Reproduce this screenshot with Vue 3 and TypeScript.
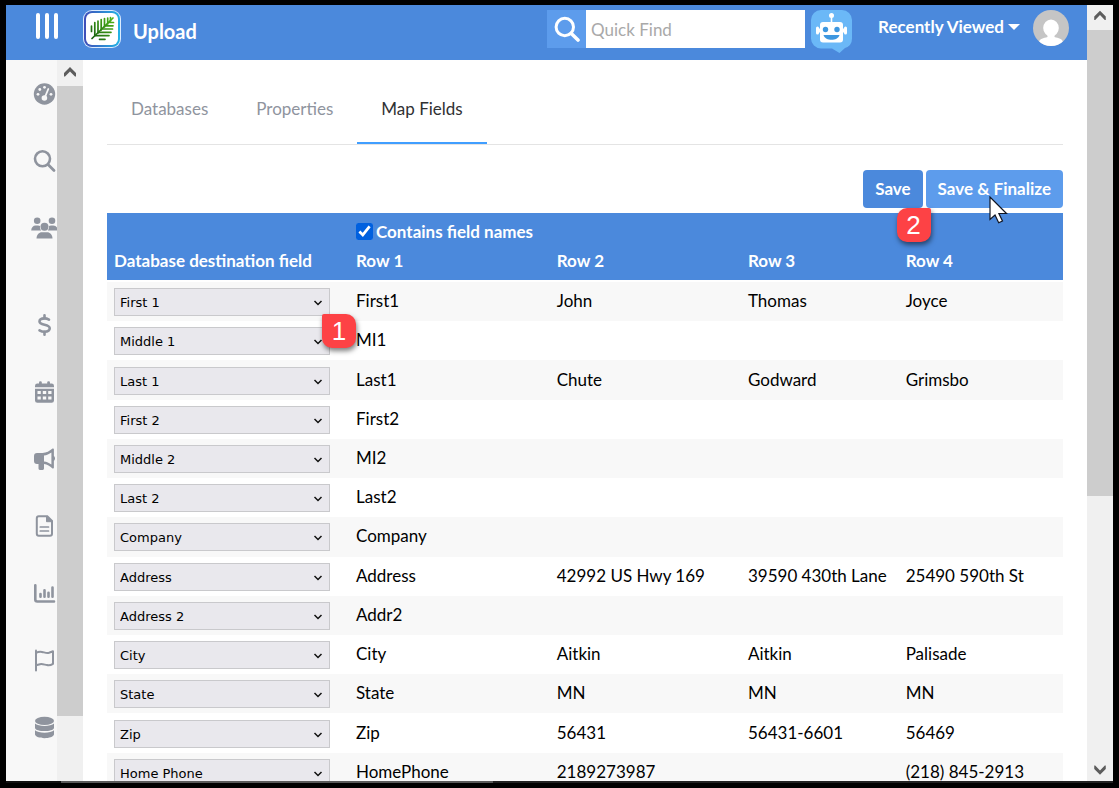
<script setup lang="ts">
import { ref } from 'vue'

interface FieldRow {
  target: string
  values: [string, string, string, string]
}

const rows = ref<FieldRow[]>([
  { target: 'First 1', values: ['First1', 'John', 'Thomas', 'Joyce'] },
  { target: 'Middle 1', values: ['MI1', '', '', ''] },
  { target: 'Last 1', values: ['Last1', 'Chute', 'Godward', 'Grimsbo'] },
  { target: 'First 2', values: ['First2', '', '', ''] },
  { target: 'Middle 2', values: ['MI2', '', '', ''] },
  { target: 'Last 2', values: ['Last2', '', '', ''] },
  { target: 'Company', values: ['Company', '', '', ''] },
  { target: 'Address', values: ['Address', '42992 US Hwy 169', '39590 430th Lane', '25490 590th St'] },
  { target: 'Address 2', values: ['Addr2', '', '', ''] },
  { target: 'City', values: ['City', 'Aitkin', 'Aitkin', 'Palisade'] },
  { target: 'State', values: ['State', 'MN', 'MN', 'MN'] },
  { target: 'Zip', values: ['Zip', '56431', '56431-6601', '56469'] },
  { target: 'Home Phone', values: ['HomePhone', '2189273987', '', '(218) 845-2913'] },
])

const targets: string[] = rows.value.map((r) => r.target)
const tabs: string[] = ['Databases', 'Properties', 'Map Fields']
const activeTab = ref('Map Fields')
const hasFieldNames = ref(true)
const quickFind = ref('')
</script>

<template>
  <div class="frame">
    <div class="window">
      <div class="app">
        <header class="topbar">
          <button class="menu" type="button" aria-label="Menu"><i></i><i></i><i></i></button>
          <svg class="logo" viewBox="0 0 38 38" aria-hidden="true">
            <defs>
              <linearGradient id="ring" x1="0" x2="1" y1="0" y2="0">
                <stop offset="0" stop-color="#3f4db8" />
                <stop offset="1" stop-color="#22b4e6" />
              </linearGradient>
              <linearGradient id="leaf" gradientUnits="userSpaceOnUse" x1="8" x2="30" y1="29" y2="8">
                <stop offset="0" stop-color="#155d10" />
                <stop offset="1" stop-color="#4fb417" />
              </linearGradient>
            </defs>
            <rect x="0" y="0" width="38" height="38" rx="9" fill="#dcecff" />
            <rect x="1" y="1" width="36" height="36" rx="8" fill="url(#ring)" />
            <rect x="3" y="3" width="32" height="32" rx="6" fill="#fff" />
            <g fill="none" stroke="url(#leaf)" stroke-width="1.700" stroke-linecap="round">
              <path d="M9 28.500L30 8" />
              <path d="M8.500 16v5.500M11.800 12.500v13M15 11v12M18.200 9.500v10.500M21.500 8.500v8.500M24.700 8v6M27.500 7.500v3.500" />
              <path d="M12.500 25.600h13.500M15.500 22.300h12.500M18.700 19h10.800M22 15.800h8M25 12.500h5.500M16.500 29.300h5.500" />
            </g>
          </svg>
          <h1 class="title">Upload</h1>
          <form class="find" role="search" @submit.prevent>
            <button class="find-btn" type="submit" aria-label="Search">
              <svg viewBox="0 0 26 26" width="26" height="26" fill="none" stroke="#fff" stroke-linecap="round">
                <circle cx="10.800" cy="11" r="8.700" stroke-width="3" />
                <path d="M17.300 17.500L24 24" stroke-width="3.600" />
              </svg>
            </button>
            <input v-model="quickFind" type="text" placeholder="Quick Find" aria-label="Quick Find" />
          </form>
          <button class="bot" type="button" aria-label="Assistant">
            <svg viewBox="0 0 41 43" width="41" height="43">
              <path d="M10 0h21a10 10 0 0 1 10 10v18.500a10 10 0 0 1-7 9.500L28.500 43 21 38.500H10A10 10 0 0 1 0 28.500V10A10 10 0 0 1 10 0z" fill="#6bb8f7" />
              <g fill="#fff">
                <circle cx="20.500" cy="5.500" r="2.500" />
                <rect x="19.700" y="6" width="1.600" height="7" />
                <rect x="9" y="12" width="23" height="20.500" rx="3" />
                <rect x="5" y="16.500" width="3" height="8" rx="1.500" />
                <rect x="33" y="16.500" width="3" height="8" rx="1.500" />
                <rect x="7" y="18.500" width="27" height="4" />
              </g>
              <circle cx="14.500" cy="19.500" r="2.700" fill="#3d97e0" />
              <circle cx="26" cy="19.500" r="2.700" fill="#3d97e0" />
              <path d="M12.500 25h16c-1 3.500-4.500 4.800-8 4.800s-7-1.300-8-4.800z" fill="#3d97e0" />
            </svg>
          </button>
          <button class="recent" type="button">Recently Viewed<i class="caret"></i></button>
          <svg class="avatar" viewBox="0 0 36 36" role="img" aria-label="Account">
            <defs><clipPath id="disc"><circle cx="18" cy="18" r="18" /></clipPath></defs>
            <g clip-path="url(#disc)">
              <rect width="36" height="36" fill="#c5c5c5" />
              <ellipse cx="18" cy="18" rx="7.800" ry="8.600" fill="#fff" />
              <path d="M14.500 22h7v5c4 1 8 2 8.500 5v5H6v-5c.5-3 4.500-4 8.500-5z" fill="#fff" />
            </g>
          </svg>
        </header>

        <div class="body">
          <nav class="side" aria-label="Sections">
            <a href="#dashboard" aria-label="Dashboard">
              <svg viewBox="0 0 27 24">
                <circle cx="13.500" cy="12" r="10.700" fill="#8f949e" />
                <g fill="#f8f8f8">
                  <circle cx="7" cy="12.300" r="1.400" /><circle cx="8.800" cy="7.500" r="1.400" />
                  <circle cx="13.500" cy="5.300" r="1.400" /><circle cx="20" cy="12.300" r="1.400" />
                  <circle cx="13.400" cy="16" r="2.800" />
                </g>
                <path d="M13.600 16L17.300 7" stroke="#f8f8f8" stroke-width="1.800" stroke-linecap="round" />
              </svg>
            </a>
            <a href="#search" aria-label="Search">
              <svg viewBox="0 0 27 24" fill="none" stroke="#8f949e" stroke-linecap="round">
                <circle cx="11.500" cy="9.800" r="7.500" stroke-width="2.600" />
                <path d="M17 15.500l6 6" stroke-width="2.800" />
              </svg>
            </a>
            <a href="#people" aria-label="People">
              <svg viewBox="0 0 27 24" fill="#8f949e">
                <circle cx="6.200" cy="4.800" r="3.300" /><circle cx="21" cy="4.800" r="3.300" />
                <path d="M.2 14.500c0-3 2-5 4.500-5h2.300c.8 0 1.500.2 2 .5-.3 2 .3 3.500 1.300 4.500z" />
                <path d="M26.800 14.500c0-3-2-5-4.500-5H20c-.8 0-1.500.2-2 .5.300 2-.3 3.500-1.300 4.500z" />
                <circle cx="13.500" cy="10.800" r="4" />
                <path d="M5.500 22.500c0-3.800 2.500-6.300 5.500-6.300h5c3 0 5.500 2.500 5.500 6.300z" />
              </svg>
            </a>
            <a href="#giving" class="group" aria-label="Giving">
              <svg viewBox="0 0 27 24" fill="none" stroke="#8f949e" stroke-width="2.600" stroke-linecap="round">
                <path d="M13.500 2.300v3M13.500 18.700v3" />
                <path d="M18 6.600c-1.500-.8-3-1.200-4.500-1.200-3 0-5 1.200-5 3.200 0 4.300 10.200 2.200 10.200 6.700 0 2.200-2.200 3.400-5.200 3.400-1.800 0-3.500-.5-5-1.400" />
              </svg>
            </a>
            <a href="#calendar" aria-label="Calendar">
              <svg viewBox="0 0 27 24" fill="#8f949e">
                <rect x="8" y="1.200" width="2.800" height="5" rx="1.300" /><rect x="16.200" y="1.200" width="2.800" height="5" rx="1.300" />
                <path d="M4 7.200V6a2.400 2.400 0 0 1 2.400-2.400h14.200A2.400 2.400 0 0 1 23 6v1.200z" />
                <path fill-rule="evenodd" d="M4 8.700h19v11.700a2.400 2.400 0 0 1-2.400 2.400H6.400A2.400 2.400 0 0 1 4 20.400zM6.500 11v3h3.300v-3zM11.800 11v3h3.400v-3zM17.200 11v3h3.300v-3zM6.500 16.500v3h3.300v-3zM11.800 16.500v3h3.400v-3zM17.200 16.500v3h3.300v-3z" />
              </svg>
            </a>
            <a href="#campaigns" aria-label="Campaigns">
              <svg viewBox="0 0 27 24" fill="#8f949e">
                <path fill-rule="evenodd" d="M22.900 2.600v6.500c1.500.8 1.500 4 0 4.800v6.500c0 1-1 1.300-1.700.8-2.200-2-5-4-8.200-4.200v4.600a1.300 1.300 0 0 1-1.300 1.300H8.800a1.300 1.300 0 0 1-1.300-1.300V17H6a3 3 0 0 1-3-3V9a3 3 0 0 1 3-3h5.500c4 0 7-2 9.700-4.200.7-.5 1.700-.2 1.700.8zM20.400 5.500c-2.200 1.600-4.800 2.700-7.400 3v6c2.600.3 5.200 1.400 7.400 3z" />
              </svg>
            </a>
            <a href="#documents" aria-label="Documents">
              <svg viewBox="0 0 27 24" fill="none" stroke="#8f949e" stroke-width="2">
                <path d="M7.800 2.300h8.500L21 7v12.700a2 2 0 0 1-2 2H7.800a2 2 0 0 1-2-2V4.300a2 2 0 0 1 2-2z" />
                <path d="M15.500 2v5.700h5.700z" fill="#8f949e" stroke-width="1" />
                <path d="M9.300 13h8.200M9.300 17h8.200" stroke-width="1.700" stroke-linecap="round" />
              </svg>
            </a>
            <a href="#reports" aria-label="Reports">
              <svg viewBox="0 0 27 24" fill="none" stroke="#8f949e" stroke-width="2.600" stroke-linecap="round" stroke-linejoin="round">
                <path d="M4.300 4.200v14.300a2 2 0 0 0 2 2H23" />
                <path d="M9.500 15.700v-2.700M13.500 15.700V9.200M17.500 15.700v-4M21.500 15.700V6.500" />
              </svg>
            </a>
            <a href="#goals" aria-label="Goals">
              <svg viewBox="0 0 27 24" fill="none" stroke="#8f949e" stroke-width="2" stroke-linecap="round" stroke-linejoin="round">
                <path d="M5 2.500v20" />
                <path d="M5 4.800c2-1 4-1.300 6-.9 2.500.5 4.500 1.600 7 .9l4-1.500v12.500c-2 1.300-4 1.700-6 1.300-2.500-.4-4.500-1.400-7-.9L5 17.300" />
              </svg>
            </a>
            <a href="#data" aria-label="Data">
              <svg viewBox="0 0 27 24" fill="#8f949e">
                <ellipse cx="13.500" cy="5.900" rx="9.500" ry="4.200" />
                <path d="M4 8.600c3 3.200 16 3.200 19 0v4.300c-1 4.200-18 4.200-19 0z" />
                <path d="M4 15.300c3 3.200 16 3.200 19 0v4.300c-1 4.800-18 4.800-19 0z" />
              </svg>
            </a>
          </nav>

          <div class="bar" aria-hidden="true">
            <svg viewBox="0 0 26 26"><path d="M7 16.500v-3.500L13 7l6 6v3.500h-1L13 11.500l-5 5z" fill="#5c5c5c" /></svg>
            <div class="thumb side-thumb"></div>
          </div>

          <main class="main">
            <nav class="tabs" aria-label="Steps">
              <a
                v-for="t in tabs"
                :key="t"
                href="#"
                :class="{ active: t === activeTab }"
                @click.prevent="activeTab = t"
              >{{ t }}</a>
            </nav>

            <div class="actions">
              <div class="action">
                <button class="btn" type="button">Save</button>
                <span class="badge two">2</span>
              </div>
              <div class="action">
                <button class="btn hover" type="button">Save &amp; Finalize</button>
                <svg class="cursor" viewBox="0 0 19 28" aria-hidden="true">
                  <path d="M1 1v22.500l5-4.500 3.700 7.800 3.800-1.800-3.600-7.500h7.600z" fill="#fff" stroke="#101522" stroke-width="1.200" />
                </svg>
              </div>
            </div>

            <table class="map">
              <thead>
                <tr>
                  <th class="c1" scope="col">Database destination field</th>
                  <th class="c2" scope="col">
                    <label class="check"><input v-model="hasFieldNames" type="checkbox" />Contains field names</label>
                    Row 1
                  </th>
                  <th class="c3" scope="col">Row 2</th>
                  <th class="c4" scope="col">Row 3</th>
                  <th scope="col">Row 4</th>
                </tr>
              </thead>
              <tbody>
                <tr v-for="(row, i) in rows" :key="i">
                  <td class="target">
                    <div class="pick">
                      <select v-model="row.target" :aria-label="'Destination for ' + row.values[0]">
                        <option v-for="t in targets" :key="t">{{ t }}</option>
                      </select>
                      <svg viewBox="0 0 10 6" aria-hidden="true"><path d="M1.500 1L5 4.500 8.500 1" fill="none" stroke="#111" stroke-width="1.500" /></svg>
                      <span v-if="i === 0" class="badge one">1</span>
                    </div>
                  </td>
                  <td v-for="(v, j) in row.values" :key="j">{{ v }}</td>
                </tr>
              </tbody>
            </table>
          </main>
        </div>
      </div>

      <div class="bar page-bar" aria-hidden="true">
        <svg viewBox="0 0 26 26"><path d="M7 15.500v-3.500L13 6l6 6v3.500h-1L13 10.500l-5 5z" fill="#5c5c5c" /></svg>
        <div class="thumb page-thumb"></div>
        <svg class="down" viewBox="0 0 26 26"><path d="M7 10v3.500l6 6 6-6V10h-1l-5 5-5-5z" fill="#5c5c5c" /></svg>
      </div>
    </div>
    <div class="edge"></div>
  </div>
</template>

<style>
html,
body,
#app {
  height: 100%;
  margin: 0;
}
</style>

<style scoped>
.frame {
  box-sizing: border-box;
  height: 100vh;
  padding: 5px 6px;
  display: flex;
  flex-direction: column;
  overflow: hidden;
  background: #000;
  font-family: Lato, "Liberation Sans", sans-serif;
  font-size: 17px;
  color: #000;
}
.frame *,
.frame *::before {
  box-sizing: border-box;
}
.edge {
  flex: none;
  height: 2px;
  background: linear-gradient(90deg, #111 5%, #5a5a5a 5%, #5a5a5a 44%, #222 44%);
}
.window {
  flex: 1;
  min-height: 0;
  display: flex;
  background: #fff;
}
.app {
  flex: 1;
  min-width: 0;
  display: flex;
  flex-direction: column;
}
button {
  border: 0;
  padding: 0;
  background: none;
  font: inherit;
  color: inherit;
  cursor: pointer;
}

.topbar {
  flex: none;
  height: 55px;
  padding: 5px 18px 0 30px;
  display: flex;
  align-items: flex-start;
  background: #4b89dc;
  color: #fff;
}
.menu {
  display: flex;
  gap: 5px;
  padding-top: 3px;
}
.menu i {
  width: 4px;
  height: 26px;
  border-radius: 2px;
  background: #fff;
}
.logo {
  width: 38px;
  height: 38px;
  margin-left: 25px;
}
.title {
  margin: 0 auto 0 12px;
  font-size: 20px;
  line-height: 42px;
  font-weight: 700;
}
.find {
  display: flex;
  height: 38px;
}
.find-btn {
  width: 39px;
  display: grid;
  place-items: center;
  background: #5d9cec;
}
.find input {
  width: 219px;
  padding: 0 5px;
  border: 0;
  border-radius: 0;
  background: #fff;
  font: inherit;
  outline: 0;
}
.find input::placeholder {
  color: #a9a9a9;
  opacity: 1;
}
.bot {
  margin-left: 6px;
}
.bot svg {
  display: block;
}
.recent {
  margin-left: 26px;
  display: flex;
  align-items: center;
  gap: 4px;
  line-height: 34px;
  font-weight: 700;
}
.caret {
  border: 6px solid transparent;
  border-top-color: #fff;
  border-bottom: 0;
}
.avatar {
  width: 36px;
  height: 36px;
  margin-left: 13px;
}

.body {
  flex: 1;
  min-height: 0;
  display: flex;
}
.side {
  width: 51px;
  padding: 22px 0 0 25px;
  overflow: hidden;
  background: #f8f8f8;
}
.side a {
  display: block;
  height: 24px;
  margin-bottom: 43px;
}
.side .group {
  margin-top: 73px;
}
.side svg {
  display: block;
  width: 27px;
  height: 24px;
}
.bar {
  flex: none;
  width: 26px;
  display: flex;
  flex-direction: column;
  background: #f0f0f0;
}
.bar svg {
  flex: none;
  width: 26px;
  height: 26px;
}
.page-bar svg {
  height: 25px;
}
.thumb {
  background: #cdcdcd;
}
.side-thumb {
  flex: none;
  height: calc(100% - 91px);
}
.page-thumb {
  height: 60%;
}
.bar .down {
  margin-top: auto;
}

.main {
  flex: 1;
  min-width: 0;
  padding: 0 24px;
  overflow: hidden;
}
.tabs {
  display: flex;
  height: 85px;
  border-bottom: 1px solid #e4e4e4;
}
.tabs a {
  padding: 0 24px;
  line-height: 97px;
  height: 84px;
  border-bottom: 2px solid transparent;
  color: #8f949e;
  text-decoration: none;
}
.tabs .active {
  color: #303133;
  border-bottom-color: #409eff;
}
.actions {
  display: flex;
  justify-content: flex-end;
  gap: 3px;
  padding: 25px 0 5px;
}
.action {
  position: relative;
}
.btn {
  display: block;
  height: 38px;
  padding: 0 12px 2px;
  border-radius: 4px;
  background: #4b89dc;
  color: #fff;
  font-weight: 700;
}
.btn.hover {
  background: #5d9cec;
}
.badge {
  position: absolute;
  z-index: 2;
  width: 34px;
  height: 34px;
  line-height: 34px;
  text-align: center;
  font-family: "Liberation Sans", Arial, sans-serif;
  font-size: 26px;
  color: #fff;
  background: #fd4245;
  box-shadow: 1px 3px 5px rgba(0, 0, 0, 0.5);
}
.one {
  left: 208px;
  top: 26px;
  border-radius: 2px 10px 10px 10px;
}
.two {
  right: -8px;
  top: 38px;
  border-radius: 10px 2px 10px 10px;
}
.cursor {
  position: absolute;
  z-index: 3;
  left: 63px;
  top: 26px;
  width: 19px;
  height: 28px;
}

.map {
  width: 100%;
  height: 579px;
  table-layout: fixed;
  border-collapse: separate;
  border-spacing: 0;
}
.map th {
  height: 69px;
  padding: 4px 0 5px 7px;
  border-bottom: 2px solid #fff;
  background: #4b89dc;
  color: #fff;
  font-weight: 700;
  line-height: 29px;
  text-align: left;
  vertical-align: bottom;
  white-space: nowrap;
}
.map td {
  padding: 0 0 1px 7px;
  line-height: 18px;
  vertical-align: middle;
  white-space: nowrap;
}
.map .target {
  padding: 1px 0 0 7px;
}
.map tbody tr:nth-child(odd) {
  background: #f8f8f8;
}
.c1 {
  width: 242px;
}
.c2 {
  width: 21%;
}
.c3 {
  width: 20%;
}
.c4 {
  width: 16.5%;
}
.check {
  display: flex;
  align-items: center;
  gap: 3px;
}
.check input {
  width: 17px;
  height: 17px;
  margin: 0;
  accent-color: #0060df;
}
.pick {
  position: relative;
  width: 216px;
}
.pick select {
  display: block;
  width: 100%;
  height: 28px;
  padding: 1px 24px 0 5px;
  border: 1px solid #c9c9cc;
  border-radius: 0;
  appearance: none;
  background: #e9e8ed;
  font-family: "DejaVu Sans", Verdana, sans-serif;
  font-size: 13px;
  color: #000;
}
.pick svg {
  position: absolute;
  right: 7px;
  top: 12px;
  width: 10px;
  height: 6px;
  pointer-events: none;
}
</style>
